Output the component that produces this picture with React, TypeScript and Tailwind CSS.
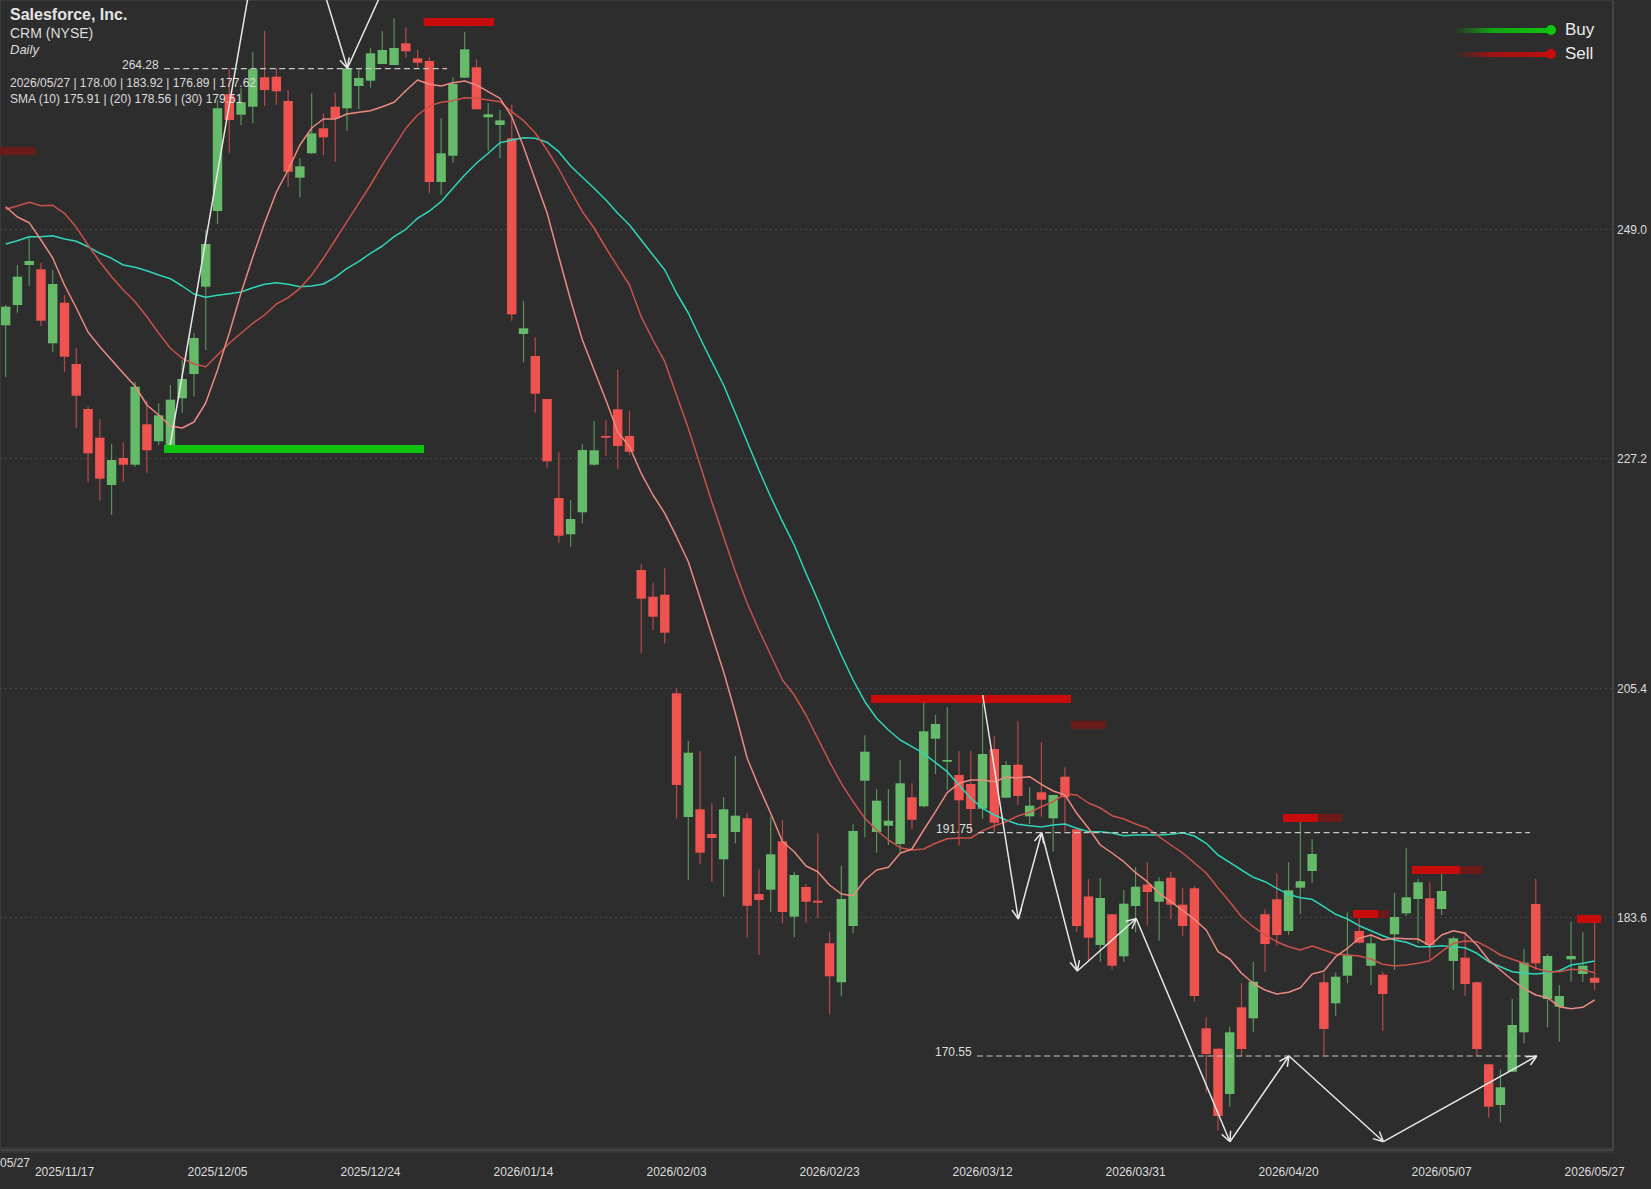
const SANS = "font-['Liberation_Sans',Arial,sans-serif]";

const GREEN = '#66bb6a';
const RED = '#ef5350';
const barX = (i: number) => 5.65 + 11.77 * i;

// [bodyTop, bodyBottom, wickTop, wickBottom, up]
const CANDLES: [number, number, number, number, number][] = [
  [306.7, 325.3, 305, 376.7, 1], [276.7, 305, 265, 312.7, 1], [261, 265, 236.7, 286, 1], [269.3, 320.7, 262.7, 326, 0],
  [284, 343.3, 270, 351.7, 1], [302.7, 356.7, 295, 371.7, 0], [364, 395.7, 348, 427.7, 0], [409, 453.3, 406.7, 482.3, 0],
  [437.7, 478.7, 419, 500.7, 0], [460, 485, 444, 515, 1], [458, 464.7, 442.3, 481.7, 0], [386.7, 464.7, 381.7, 466.7, 1],
  [424.3, 450.3, 400.7, 472.7, 0], [415.3, 441.3, 403.3, 445, 1], [399.7, 445, 385, 447, 1], [379, 398.3, 360, 412.7, 1],
  [338, 374, 333, 396.7, 1], [244, 286.7, 230, 350, 1], [108.3, 211, 100, 224, 1], [94.3, 120, 68.3, 152.7, 0],
  [102.3, 114.7, 88, 125, 1], [69.3, 106.7, 51.7, 123.3, 1], [77.3, 90, 31, 106, 0], [76.7, 91.3, 67.7, 105, 0],
  [101, 171.7, 90, 186.7, 0], [166.3, 177.7, 158.3, 197.3, 1], [133.3, 153.3, 93.3, 154, 1], [128.3, 137.3, 113.3, 155, 0],
  [106.7, 118.3, 92.7, 161.7, 0], [68.3, 108.3, 66, 130.7, 1], [78, 86, 69.3, 109.3, 1], [53.3, 80.7, 47.7, 87.7, 1],
  [50, 64, 31, 64, 1], [48, 65, 18.3, 65, 1], [43.3, 51.3, 27.3, 57.7, 0], [58.3, 62.7, 50, 67.7, 0],
  [61, 182, 57.3, 193.3, 0], [153.3, 182, 118.3, 195, 1], [84, 155.7, 77.3, 162.7, 1], [49.3, 77.7, 31.7, 77.7, 1],
  [67.3, 109.3, 59.3, 109.3, 0], [114.3, 117.3, 103.3, 150.7, 1], [120.3, 125, 110, 158.3, 1], [138.3, 314.3, 104.3, 320.7, 0],
  [328.3, 334, 301, 362.3, 1], [356, 393.7, 337.3, 412.7, 0], [399, 461.3, 399, 467.7, 0], [498, 535.7, 452.3, 542.7, 0],
  [519, 534.3, 500, 546.7, 1], [450, 512.3, 444, 523.3, 1], [450.3, 464.7, 421, 465.7, 1], [436, 437.7, 420, 455.7, 0],
  [409.3, 446, 370, 469.3, 0], [436, 451.7, 410.7, 455, 0], [570, 598.7, 564.3, 653.3, 0], [596.7, 616.7, 582.7, 630, 0],
  [594.7, 632.7, 568.3, 643.3, 0], [693.3, 785, 688.3, 818.3, 0], [752.7, 817, 741, 880, 1], [809.3, 852.7, 751, 864.3, 0],
  [834, 838, 803.3, 881.7, 0], [809.3, 859.3, 797.3, 896.7, 1], [815.7, 832, 756, 843.3, 1], [818.3, 905.7, 813.3, 937.7, 0],
  [894, 900, 869.3, 955, 0], [854.3, 889.7, 816.7, 911.7, 1], [841.3, 912, 820, 923.3, 0], [875, 916.7, 871.7, 937.3, 1],
  [887, 901.7, 884, 922.7, 0], [900.7, 902.7, 833.3, 918, 0], [943.3, 976.3, 931.7, 1014.3, 0], [899, 982.3, 865.7, 996, 1],
  [831, 926, 824.3, 933.3, 1], [751.7, 780.7, 735.3, 837.3, 1], [800.7, 832, 789, 852.7, 1], [820.7, 825.7, 789, 845, 1],
  [783.3, 844, 760, 852.7, 1], [797.3, 819.7, 783.3, 829.3, 0], [731.3, 806.3, 700, 807.3, 1], [724, 738.7, 715, 774, 1],
  [760, 761.7, 707.3, 790, 1], [775, 800.3, 751, 845.7, 0], [784, 809, 751, 833.3, 0], [754, 808.7, 695, 819, 1],
  [749, 822.7, 735.7, 832.7, 0], [765, 797.7, 761, 797.7, 1], [764.7, 796, 721.3, 805, 0], [805.7, 816.3, 787.3, 824, 1],
  [792.3, 799.7, 742, 816.7, 0], [795, 818.3, 795, 851.7, 1], [776.7, 797.3, 767.3, 831.7, 0], [829.3, 926, 829.3, 931.7, 0],
  [896.5, 937.7, 879.3, 960, 0], [898, 945, 878, 961.7, 1], [914.3, 965.7, 914.3, 969.3, 0], [903.7, 956.3, 890, 961.7, 1],
  [886.7, 906, 867.3, 932.3, 1], [884.5, 892, 862.3, 925.7, 0], [881.3, 901.7, 877.3, 940.7, 1], [877.7, 904.7, 871.7, 919.3, 0],
  [904.7, 926, 887.7, 935.7, 0], [888.3, 996, 886, 1001.7, 0], [1028.3, 1054, 1017.3, 1092.7, 0], [1048.7, 1116, 1048.7, 1130.7, 0],
  [1032.3, 1094, 1026.7, 1106.7, 1], [1007.3, 1049, 983.3, 1056, 0], [981.7, 1018.3, 961.7, 1031.7, 1], [914.3, 944, 909.3, 971.7, 0],
  [899.3, 935, 873.3, 945.7, 0], [890.3, 931, 862.3, 935, 1], [881.3, 887.7, 821.7, 914, 1], [854, 871, 839.3, 882.7, 1],
  [982.3, 1029, 973.3, 1055, 0], [976.7, 1003.3, 972.7, 1015.7, 1], [955.3, 975.7, 912.3, 983.3, 1], [931, 942.7, 918.3, 943.3, 0],
  [943.3, 965.7, 934.3, 985, 1], [974.7, 994, 971.7, 1030.7, 0], [917, 934.3, 892.7, 970, 1], [897.3, 913.3, 848.3, 916, 1],
  [882.3, 899, 879, 943.3, 1], [898.3, 945, 882.3, 960, 0], [891, 909, 873.3, 915, 1], [938.3, 961, 936.7, 990, 1],
  [957.7, 984, 931.7, 996, 0], [982.3, 1049, 982.3, 1056, 0], [1064.3, 1106.7, 1064.3, 1117.7, 0], [1087.3, 1105, 1069.3, 1122.3, 1],
  [1025, 1071.7, 999, 1071.7, 1], [962.7, 1032.3, 949, 1043.3, 1], [904, 963.3, 879, 970, 0], [956, 999, 954, 1027.3, 1],
  [996, 1006.7, 985, 1041.7, 1], [956, 959.3, 921.7, 981.7, 1], [965.7, 974, 932.3, 981.7, 1], [977.7, 982.7, 916.7, 990, 0],
];

const SMA10 = [
  206.7, 217, 222.7, 240, 258, 285, 308, 332, 346.7, 360, 373.3, 386, 405, 415, 426, 428, 422, 403, 370, 333,
  293, 257, 223, 192, 170, 145, 128, 119, 119, 114, 112.3, 110.7, 106.7, 102.3, 90.7, 80, 84.3, 86, 82.7, 81,
  85, 91.7, 98.3, 116.7, 146.7, 180, 213, 256.7, 300, 340, 370, 400, 431.7, 446.7, 473.3, 495, 513.3, 536.7, 561.7, 598.3,
  635, 671.7, 713.3, 758.3, 786.7, 813.3, 841.7, 851.7, 866, 871.7, 885, 894, 895.7, 880, 870, 867.3, 853.3, 849, 830, 811.7,
  792.7, 783.3, 780, 780, 781.7, 777.3, 777.7, 776.7, 784.3, 791, 795, 813.3, 828.3, 845, 853, 861.7, 872.7, 881.7, 893.3, 901.7,
  910.7, 919.3, 930, 951.7, 959, 973.3, 983.3, 990, 994, 992.3, 987.7, 974, 971, 956.7, 948.3, 938.3, 935, 940, 938.3, 938.7,
  939, 945.7, 935, 930.7, 933.3, 945, 960, 970, 980, 988.3, 995, 997.7, 1006.7, 1008.7, 1007.3, 1000,
];

const SMA20 = [
  209.3, 206, 202.3, 205.7, 205.3, 213.3, 227.3, 245, 261.7, 276.7, 290, 301.7, 316.7, 333.3, 348.3, 358.3, 364, 366.7, 355, 343.3,
  333.3, 323.3, 315, 304, 297.7, 288.3, 275, 258.3, 240, 221.7, 203.3, 185, 165, 146.7, 128.3, 115, 106, 102.3, 100.7, 97.7,
  98.3, 100, 101.7, 111.7, 120.7, 133, 150, 169, 190.7, 211.7, 228, 248, 266.7, 285, 316.7, 340, 361.7, 395, 428.3, 465,
  501.7, 536.7, 571.7, 603.3, 630, 655, 680, 695, 715, 738.3, 761.7, 783.3, 801.7, 818.3, 830, 840, 847.7, 850, 849, 843.3,
  838.7, 838, 838, 830.7, 825.7, 821.7, 816, 812.3, 806.7, 801.7, 794, 795, 803, 808, 815.7, 819, 824, 828, 836.7, 845,
  853, 863, 873, 888, 901.7, 916.7, 926.7, 935, 941.7, 946.7, 950, 946, 950, 954, 955, 956, 959, 964.3, 966, 965,
  963.3, 960.7, 951.7, 943.3, 941, 941.7, 947.7, 955, 959.3, 963.3, 968.3, 971.7, 971.7, 969.3, 970, 972.7,
];

const SMA30 = [
  244, 240.7, 236.7, 236.7, 235.7, 239, 241.3, 246.7, 253.3, 258.3, 265, 267.3, 270.7, 275, 278.7, 286, 294, 297.3, 295.3, 293.7,
  292, 287.7, 284.3, 282.7, 284.3, 286.7, 286, 284, 277.3, 268.3, 261.7, 253.3, 246, 236.7, 229.3, 218.3, 211, 201.7, 188.3, 175,
  163.3, 153.3, 142.7, 140, 137.7, 138.3, 142.3, 151.7, 166, 177.3, 188.3, 200, 213.3, 225, 240, 255, 270, 293, 313, 338,
  361.7, 385, 413.3, 441.7, 470, 496.7, 521.7, 545, 573.3, 600, 628.3, 655, 680, 701.7, 718.3, 730, 740, 746.7, 753.3, 762.7,
  771.7, 785, 798.3, 808.3, 815, 820, 824.3, 825.7, 827, 825, 824, 828.3, 831.7, 831.7, 833, 835.7, 835, 835, 835, 834.3,
  832.7, 836, 843.3, 855, 862.3, 870, 877.3, 881.7, 888.3, 894.3, 897.7, 899.3, 906.7, 914.3, 919, 925.7, 930.7, 935.7, 940, 942.3,
  946.7, 946.7, 945.7, 946.7, 947.7, 953.3, 961.7, 966.7, 971.7, 973.3, 974, 972.7, 970.7, 965, 963.3, 961,
];

const SIGNALS: { x1: number; x2: number; y: number; fill: string }[] = [
  { x1: 0, x2: 35, y: 147, fill: '#6b1a1a' },
  { x1: 423.5, x2: 494, y: 18, fill: '#c80c0c' },
  { x1: 164, x2: 424, y: 445, fill: '#10c510' },
  { x1: 871, x2: 1071, y: 695, fill: '#c80c0c' },
  { x1: 1071, x2: 1106, y: 721, fill: '#6b1a1a' },
  { x1: 1283, x2: 1318, y: 814, fill: '#c80c0c' },
  { x1: 1318, x2: 1342, y: 814, fill: '#6b1a1a' },
  { x1: 1353, x2: 1378, y: 910, fill: '#c80c0c' },
  { x1: 1378, x2: 1389, y: 910, fill: '#6b1a1a' },
  { x1: 1412, x2: 1460, y: 866, fill: '#c80c0c' },
  { x1: 1460, x2: 1483, y: 866, fill: '#6b1a1a' },
  { x1: 1577, x2: 1601, y: 915, fill: '#c80c0c' },
];

const LEVELS = [
  { x1: 164, x2: 447, y: 68.7, label: '264.28', left: 122, offset: 11 },
  { x1: 978, x2: 1530, y: 832.7, label: '191.75', left: 936, offset: 11 },
  { x1: 977, x2: 1537, y: 1056, label: '170.55', left: 935, offset: 11 },
];

// zigzag legs, each with its head at the end; two of them leave the top of the plot
const ARROW_LEGS: [number, number, number, number][] = [
  [170, 446, 252.7, -30],
  [326, -2, 347.4, 68.3],
  [347.4, 68.3, 392, -30],
  [982.7, 695, 1018.3, 919],
  [1018.3, 919, 1041.7, 832.7],
  [1041.7, 832.7, 1077.3, 971],
  [1077.3, 971, 1136.2, 918.5],
  [1136.2, 918.5, 1230, 1141.7],
  [1230, 1141.7, 1289, 1056],
  [1289, 1056, 1383.5, 1141.7],
  [1383.5, 1141.7, 1536.8, 1056],
];

const GRID = [
  { y: 229, label: '249.0' },
  { y: 458, label: '227.2' },
  { y: 688, label: '205.4' },
  { y: 917, label: '183.6' },
];

const DATES = [
  '2025/11/17', '2025/12/05', '2025/12/24', '2026/01/14', '2026/02/03', '2026/02/23',
  '2026/03/12', '2026/03/31', '2026/04/20', '2026/05/07', '2026/05/27',
];

const toPoints = (ys: number[]) => ys.map((y, i) => `${barX(i).toFixed(1)},${y}`).join(' ');

function wing(x1: number, y1: number, x2: number, y2: number, turn: number) {
  const angle = Math.atan2(y1 - y2, x1 - x2) + turn;
  return `M${x2} ${y2}L${(x2 + 11 * Math.cos(angle)).toFixed(1)} ${(y2 + 11 * Math.sin(angle)).toFixed(1)}`;
}

function Chart() {
  return (
    <svg width={1614} height={1151} className="block">
      {GRID.map((g) => (
        <line key={g.y} x1={0} x2={1612} y1={g.y + 0.5} y2={g.y + 0.5} stroke="#474747" strokeDasharray="2 3" />
      ))}

      {CANDLES.map(([top, bottom, wickTop, wickBottom, up], i) => {
        const x = barX(i);
        const color = up ? GREEN : RED;
        return (
          <g key={i}>
            <line x1={x} x2={x} y1={wickTop} y2={wickBottom} stroke={color} strokeOpacity={0.72} strokeWidth={1.2} />
            <rect x={x - 4.7} y={top} width={9.4} height={bottom - top} fill={color} />
          </g>
        );
      })}

      <polyline points={toPoints(SMA30)} fill="none" stroke="#2fd6ba" strokeWidth={1.5} strokeLinejoin="round" />
      <polyline points={toPoints(SMA20)} fill="none" stroke="#c9524a" strokeWidth={1.5} strokeLinejoin="round" />
      <polyline points={toPoints(SMA10)} fill="none" stroke="#ec8a80" strokeWidth={1.5} strokeLinejoin="round" />

      {LEVELS.map((l) => (
        <line key={l.y} x1={l.x1} x2={l.x2} y1={l.y} y2={l.y} stroke="#c6c6c6" strokeWidth={1.2} strokeDasharray="6 3.6" />
      ))}

      {ARROW_LEGS.map(([x1, y1, x2, y2]) => (
        <path
          key={`${x1}-${y1}`}
          d={`M${x1} ${y1}L${x2} ${y2}${wing(x1, y1, x2, y2, 0.45)}${wing(x1, y1, x2, y2, -0.45)}`}
          fill="none"
          stroke="#e6e6e6"
          strokeWidth={1.5}
        />
      ))}

      {SIGNALS.map((s) => (
        <rect key={`${s.x1}-${s.y}`} x={s.x1} y={s.y} width={s.x2 - s.x1} height={8} fill={s.fill} />
      ))}

      {/* the top of the 03/12 arrow sits over its signal bar */}
      <line x1={982.7} y1={695} x2={984} y2={703} stroke="#e6e6e6" strokeWidth={1.5} />
    </svg>
  );
}

function LegendRow({ label, bar, dot }: { label: string; bar: string; dot: string }) {
  return (
    <div className="flex items-center h-[24px]">
      <div className={`w-[98px] h-[5px] ${bar}`} />
      <div className={`w-[10px] h-[10px] -ml-[5px] rounded-full ${dot}`} />
      <span className="ml-[9px] text-[17px] leading-[24px] text-[#ececec]">{label}</span>
    </div>
  );
}

export default function App() {
  return (
    <div className={`${SANS} w-[1651px] h-[1189px] overflow-hidden bg-[#2d2d2d] flex flex-col`}>
      <div className="flex h-[1151px]">
        {/* Plot area */}
        <div className="relative w-[1614px] h-[1151px] shadow-[inset_1px_1px_0_#3a3a3a,inset_-2px_-2px_0_#444444,inset_0_-4px_0_#363636,0_2px_0_#363636]">
          <Chart />

          <div className="absolute left-[10px] top-[6px] text-[#dcdcdc]">
            <div className="text-[16px] leading-[18px] font-bold text-[#e4e4e4]">Salesforce, Inc.</div>
            <div className="text-[14px] leading-[18px]">CRM (NYSE)</div>
            <div className="text-[13px] leading-[16px] italic">Daily</div>
            <div className="mt-[18px] text-[12px] leading-[15px] whitespace-nowrap">
              2026/05/27 | 178.00 | 183.92 | 176.89 | 177.62
            </div>
            <div className="mt-[1px] text-[12px] leading-[15px] whitespace-nowrap">
              SMA (10) 175.91 | (20) 178.56 | (30) 179.51
            </div>
          </div>

          {LEVELS.map((l) => (
            <span
              key={l.label}
              className="absolute text-[12px] leading-[14px] text-[#dedede]"
              style={{ left: l.left, top: l.y - l.offset }}
            >
              {l.label}
            </span>
          ))}

          <div className="absolute left-[1453px] top-[18px]">
            <LegendRow label="Buy" bar="bg-gradient-to-r from-transparent via-[#10a510] via-40% to-[#10c510]" dot="bg-[#10c510]" />
            <LegendRow label="Sell" bar="bg-gradient-to-r from-transparent via-[#a01212] via-40% to-[#c00e0e]" dot="bg-[#c80c0c]" />
          </div>
        </div>

        {/* Price axis */}
        <div className="relative flex-1">
          {GRID.map((g) => (
            <span
              key={g.label}
              className="absolute left-[3px] -translate-y-1/2 text-[12px] leading-[14px] text-[#dedede]"
              style={{ top: g.y + 0.5 }}
            >
              {g.label}
            </span>
          ))}
        </div>
      </div>

      {/* Date axis */}
      <div className="relative flex-1 text-[12px] leading-[14px] text-[#dedede]">
        <span className="absolute left-0 top-[5px]">05/27</span>
        {DATES.map((d, i) => (
          <span key={d} className="absolute top-[14px] -translate-x-1/2" style={{ left: barX(5 + 13 * i) }}>
            {d}
          </span>
        ))}
      </div>
    </div>
  );
}
